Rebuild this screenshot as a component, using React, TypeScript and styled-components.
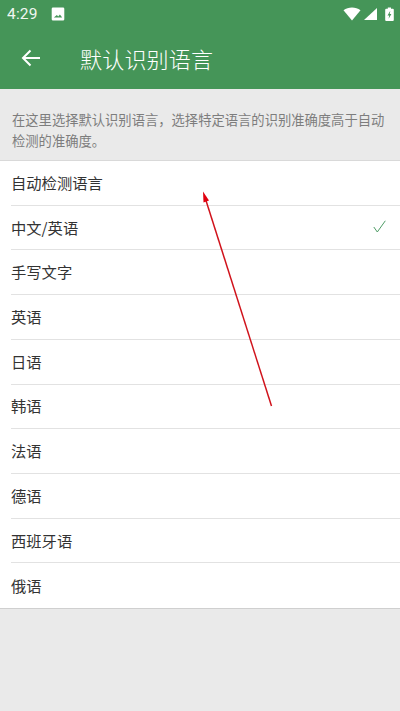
import React from "react"
import styled, {createGlobalStyle} from "styled-components";

const GlobalStyle = createGlobalStyle`
    html, body {
        margin: 0;
        padding: 0;
        background-color: #EAEAEA;
    }
    #root {
        height: 711px;
        overflow: hidden;
    }
`
const Page = styled.div`
    position: relative;
    width: 400px;
    height: 711px;
    display: flex;
    flex-direction: column;
    background-color: #EAEAEA;
    font-family: "Noto Sans CJK SC", "Noto Sans", sans-serif;
`
const Header = styled.header`
    background-color: #459558;
    height: 89px;
    display: flex;
    flex-direction: column;
    color: white;
`
const StatusBar = styled.div`
    height: 28px;
    display: flex;
    align-items: center;
    padding: 0 6px 0 7px;
`
const Clock = styled.span`
    font-family: Roboto, sans-serif;
    font-size: 15.5px;
    opacity: .92;
    letter-spacing: .2px;
`
const StatusRight = styled.div`
    margin-left: auto;
    display: flex;
    align-items: center;
`
const PictureIcon = styled.svg`
    margin-left: 13px;
`
const SignalIcon = styled.svg`
    margin-left: 3px;
`
const BatteryIcon = styled.svg`
    margin-left: 8px;
`
const Toolbar = styled.div`
    flex: 1;
    display: flex;
    align-items: center;
    padding: 0 0 2px 20px;
`
const Title = styled.h1`
    margin: 0 0 0 38px;
    font-size: 22px;
    font-weight: 300;
    line-height: 30px;
    letter-spacing: .2px;
`
const Hint = styled.p`
    margin: 0;
    height: 71px;
    box-sizing: border-box;
    padding: 21px 11px 0 12px;
    font-size: 13.3px;
    line-height: 20.5px;
    color: #7d7d7d;
`
const List = styled.ul`
    margin: 0;
    padding: 0;
    list-style: none;
    background-color: white;
    border-top: 1px solid #D9D9D9;
    border-bottom: 1px solid #CFCFCF;
`
const Row = styled.li<{$last?: boolean}>`
    height: 44.73px;
    box-sizing: border-box;
    margin-left: 11px;
    padding: 0 14px 2px 0;
    display: flex;
    align-items: center;
    justify-content: space-between;
    font-size: 15.3px;
    color: #333;
    border-bottom: ${p => p.$last ? "none" : "1px solid #E2E2E2"};
`
const Annotation = styled.svg`
    position: absolute;
    left: 0;
    top: 0;
    pointer-events: none;
`

const languages = ["自动检测语言", "中文/英语", "手写文字", "英语", "日语", "韩语", "法语", "德语", "西班牙语", "俄语"]

const App: React.FC = () => {
    return (
        <Page>
            <GlobalStyle/>
            <Header>
                <StatusBar>
                    <Clock>4:29</Clock>
                    <PictureIcon width="14" height="14" viewBox="0 0 14 14">
                        <path d="M2 .5h10a1.300 1.300 0 0 1 1.300 1.300v10.400a1.300 1.300 0 0 1-1.300 1.300H2a1.300 1.300 0 0 1-1.300-1.300V1.800A1.300 1.300 0 0 1 2 .5zM2.800 10.500h8.400L8.900 7.400 7.200 9.500 5.900 8z" fill="white" fillRule="evenodd"/>
                    </PictureIcon>
                    <StatusRight>
                        <svg width="18" height="14" viewBox="0 0 18 14">
                            <path d="M0.500 3.300C3 1.300 5.800 0.500 9 0.500s6 .8 8.500 2.800L9 13.500z" fill="white"/>
                        </svg>
                        <SignalIcon width="13" height="14" viewBox="0 0 13 14">
                            <path d="M13 1v12H0z" fill="white"/>
                        </SignalIcon>
                        <BatteryIcon width="9" height="15" viewBox="0 0 9 15">
                            <path d="M2.800 0.500h3.200v1.300h1.800a1 1 0 0 1 1 1v10.200a1 1 0 0 1-1 1H1.200a1 1 0 0 1-1-1V2.800a1 1 0 0 1 1-1h1.600zM5.300 3.800 2.500 8.500h1.700l-.6 3.300 2.800-4.800H4.700z" fill="white" fillRule="evenodd"/>
                        </BatteryIcon>
                    </StatusRight>
                </StatusBar>
                <Toolbar>
                    <svg width="22" height="22" viewBox="0 0 22 22" fill="none" stroke="white" strokeWidth="2">
                        <path d="M20 11H3M10.500 3.500 3 11l7.500 7.500"/>
                    </svg>
                    <Title>默认识别语言</Title>
                </Toolbar>
            </Header>
            <Hint>在这里选择默认识别语言，选择特定语言的识别准确度高于自动检测的准确度。</Hint>
            <List>
                {languages.map((name, i) => (
                    <Row key={name} $last={i === languages.length - 1}>
                        {name}
                        {i === 1 &&
                            <svg width="13" height="13" viewBox="0 0 13 13" fill="none" stroke="#4E9C66" strokeWidth="1">
                                <path d="M.8 7 4.300 12 12.300 .8"/>
                            </svg>}
                    </Row>
                ))}
            </List>
            <Annotation width="400" height="711" viewBox="0 0 400 711">
                <path d="M271.500 406 205.500 199" stroke="#D0121B" strokeWidth="1.500" fill="none"/>
                <path d="M203 191.500 209 200.500 203.500 202.500z" fill="#E0000F"/>
            </Annotation>
        </Page>
    )
}

export default App
